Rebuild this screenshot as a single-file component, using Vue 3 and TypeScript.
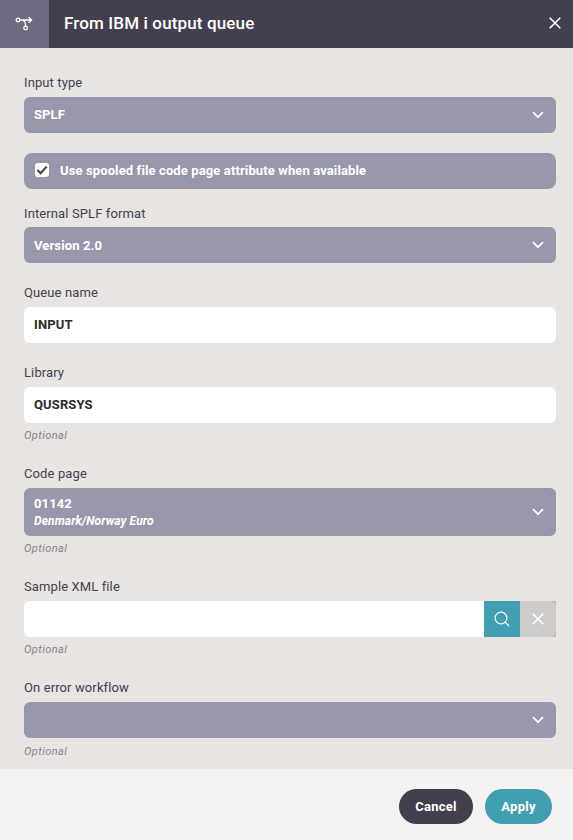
<script setup lang="ts">
import { ref } from 'vue'

interface Field {
  id: string
  kind: 'select' | 'text' | 'check' | 'file'
  label: string
  value: string
  detail?: string
  optional?: boolean
}

const fields = ref<Field[]>([
  { id: 'type', kind: 'select', label: 'Input type', value: 'SPLF' },
  { id: 'spooled', kind: 'check', label: 'Use spooled file code page attribute when available', value: '' },
  { id: 'format', kind: 'select', label: 'Internal SPLF format', value: 'Version 2.0' },
  { id: 'queue', kind: 'text', label: 'Queue name', value: 'INPUT' },
  { id: 'library', kind: 'text', label: 'Library', value: 'QUSRSYS', optional: true },
  { id: 'codepage', kind: 'select', label: 'Code page', value: '01142', detail: 'Denmark/Norway Euro', optional: true },
  { id: 'sample', kind: 'file', label: 'Sample XML file', value: '', optional: true },
  { id: 'onerror', kind: 'select', label: 'On error workflow', value: '', optional: true },
])
const checked = ref(true)
</script>

<template>
  <div class="dialog">
    <header class="header">
      <div class="badge">
        <svg width="18" height="16" viewBox="0 0 18 16" fill="none" stroke="#fff" stroke-width="1.3">
          <circle cx="3" cy="4" r="1.8" />
          <circle cx="10.6" cy="12" r="1.8" />
          <path d="M5 4H16M13.6 1.2L16.6 4L13.6 6.8M7 4.2C9.6 4.4 10.6 6 10.6 10" />
        </svg>
      </div>
      <h1 class="title">From IBM i output queue</h1>
      <button class="close" aria-label="Close">
        <svg width="12" height="12" viewBox="0 0 12 12" fill="none" stroke="#fff" stroke-width="1.6">
          <path d="M.7.7L11.3 11.3M11.3.7L.7 11.3" />
        </svg>
      </button>
    </header>

    <main class="body">
      <div v-for="f in fields" :key="f.id" class="field" :class="['field-' + f.kind, 'row-' + f.id]">
        <button v-if="f.kind === 'check'" class="control fill check-row" @click="checked = !checked">
          <span class="box">
            <svg v-if="checked" width="14" height="14" viewBox="0 0 14 14" fill="none" stroke="#433f4e" stroke-width="2.1">
              <path d="M2.3 7L5.6 10.2L11.7 3.6" />
            </svg>
          </span>
          <span>{{ f.label }}</span>
        </button>
        <template v-else>
          <label class="label" :for="f.id">{{ f.label }}</label>
          <button v-if="f.kind === 'select'" :id="f.id" class="control fill select" :class="{ tall: f.detail }">
            <span class="values">
              <span>{{ f.value }}</span>
              <em v-if="f.detail" class="detail">{{ f.detail }}</em>
            </span>
            <svg width="12" height="8" viewBox="0 0 12 8" fill="none" stroke="#fff" stroke-width="1.7">
              <path d="M1 1.2L6 6.2L11 1.2" />
            </svg>
          </button>
          <input v-else-if="f.kind === 'text'" :id="f.id" v-model="f.value" class="control input" />
          <div v-else class="file-row">
            <input :id="f.id" v-model="f.value" class="control input" />
            <button class="tool search" aria-label="Browse">
              <svg width="16" height="16" viewBox="0 0 16 16" fill="none" stroke="#fff" stroke-width="1.2">
                <circle cx="7" cy="7" r="5.9" />
                <path d="M11.2 11.2L15 15" />
              </svg>
            </button>
            <span class="clear-wrap">
              <button class="tool clear" aria-label="Clear">
                <svg width="12" height="12" viewBox="0 0 12 12" fill="none" stroke="#fff" stroke-width="1.6">
                  <path d="M.7.7L11.3 11.3M11.3.7L.7 11.3" />
                </svg>
              </button>
            </span>
          </div>
          <div v-if="f.optional" class="hint">Optional</div>
        </template>
      </div>
    </main>

    <footer class="footer">
      <button class="action cancel">Cancel</button>
      <button class="action apply">Apply</button>
    </footer>
  </div>
</template>

<style>
body {
  margin: 0;
}
</style>

<style scoped>
.dialog {
  display: flex;
  flex-direction: column;
  height: 840px;
  overflow: hidden;
  background: #e7e4e1;
  color: #433f4e;
  font: 13px/20px Roboto, sans-serif;
}
.dialog * {
  box-sizing: border-box;
}
button,
input {
  border: 0;
  margin: 0;
  padding: 0;
  outline: 0;
  font: inherit;
  letter-spacing: inherit;
}
svg {
  display: block;
  flex: none;
}
.header {
  display: flex;
  flex: none;
  align-items: center;
  height: 48px;
  background: #433f4e;
  color: #fff;
}
.badge {
  display: flex;
  align-items: center;
  justify-content: center;
  width: 49px;
  height: 48px;
  padding-right: 1px;
  background: #6f6b82;
}
.title {
  flex: 1;
  margin: 0;
  padding: 0 0 2px 15px;
  font-size: 17px;
  font-weight: 500;
  letter-spacing: 0.14px;
}
.close {
  padding: 0 12px 2px 0;
  background: none;
}
.body {
  flex: 1;
  min-height: 0;
  overflow: hidden;
  padding: 25px 17px 0 24px;
}
.field {
  margin-bottom: 20px;
}
.field-check {
  margin-bottom: 14px;
}
.field:has(.hint) {
  margin-bottom: 19px;
}
.label {
  display: block;
  height: 24px;
  letter-spacing: 0.11px;
}
.row-format .label {
  padding-top: 1px;
}
.control {
  display: flex;
  align-items: center;
  width: 100%;
  height: 36px;
  padding: 0 10px;
  border-radius: 6px;
  font-weight: 700;
  letter-spacing: 0.12px;
  text-align: left;
}
.fill {
  background: #9997ab;
  color: #fff;
}
.select {
  justify-content: space-between;
  padding-right: 12px;
}
.tall {
  height: 48px;
}
.values {
  display: flex;
  flex-direction: column;
  line-height: 17px;
}
.row-type .values {
  padding-bottom: 2px;
}
.detail {
  font-size: 12px;
  line-height: 18px;
  letter-spacing: 0.1px;
}
.check-row {
  gap: 11px;
  padding-left: 11px;
  border-radius: 8px;
}
.box {
  width: 14px;
  height: 14px;
  margin-bottom: 2px;
  border-radius: 3px;
  background: #fff;
}
.input {
  padding-bottom: 2px;
  background: #fff;
  color: #2b2b2b;
}
.file-row {
  display: flex;
}
.file-row .input {
  flex: 1;
  width: auto;
  min-width: 0;
  border-radius: 6px 0 0 6px;
}
.tool {
  display: flex;
  align-items: center;
  justify-content: center;
  width: 36px;
  height: 36px;
}
.search {
  background: #419fb2;
}
.clear-wrap {
  background: #bab8b7;
}
.clear {
  border-radius: 0 6px 6px 0;
  background: #cdccca;
}
.hint {
  height: 22px;
  padding-top: 3px;
  color: #85818b;
  font-size: 11px;
  font-style: italic;
  letter-spacing: 0.45px;
}
.row-onerror .hint {
  padding-top: 4px;
}
.footer {
  display: flex;
  flex: none;
  gap: 12px;
  justify-content: flex-end;
  height: 71px;
  padding: 20px 21px 0 0;
  background: #f4f3f1;
}
.action {
  height: 35px;
  border-radius: 18px;
  color: #fff;
  font-weight: 700;
  letter-spacing: 0.25px;
}
.cancel {
  width: 74px;
  background: #433f4e;
}
.apply {
  width: 67px;
  background: #419fb2;
}
</style>
